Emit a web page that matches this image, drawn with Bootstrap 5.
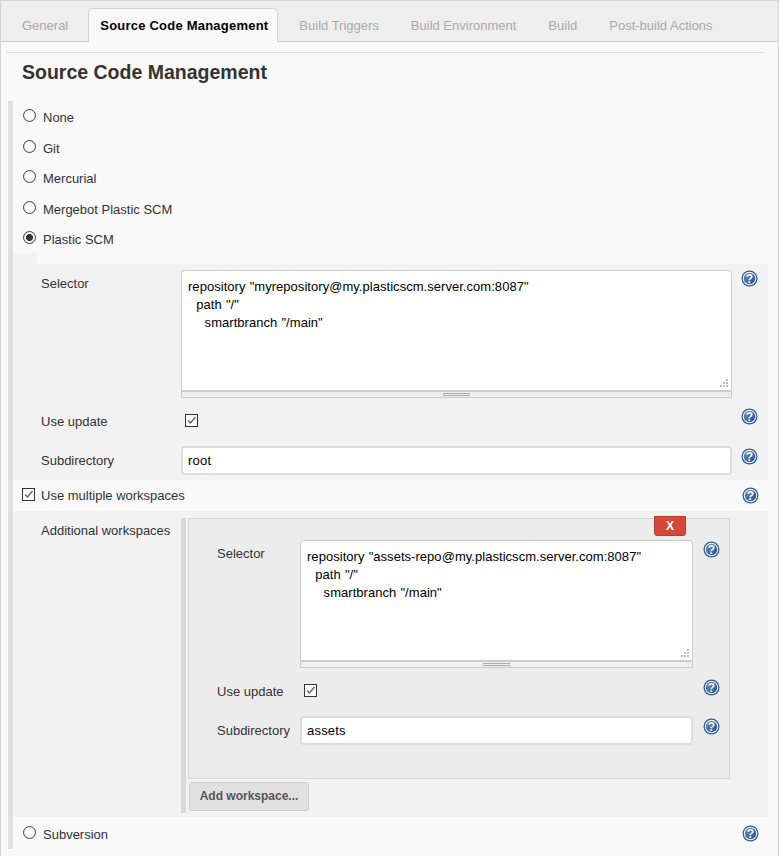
<!DOCTYPE html>
<html lang="en">
<head>
<meta charset="utf-8">
<title>Source Code Management</title>
<link href="https://cdn.jsdelivr.net/npm/bootstrap@5.3.0/dist/css/bootstrap.min.css" rel="stylesheet">
<style>
html,body{height:100%;overflow:hidden}
body{font-family:"Liberation Sans",Arial,sans-serif;font-size:13px;line-height:18px;color:#333;background:#f9f9f9}
.frame{height:856px;overflow:hidden;border-left:1px solid #d3d3d3;border-right:1px solid #d3d3d3;border-top:1px solid #d3d3d3;background:#f9f9f9}
.tabstrip{height:41px;background:#eee;border-bottom:1px solid #ccc;padding:7px 0 0 6px;flex-wrap:nowrap}
.tabstrip .nav-link{font-size:13px;line-height:18px;color:#aaa;height:34px;padding:9px 16px 7px;border:0;margin:0;border-radius:0;white-space:nowrap;background:transparent}
.tabstrip .nav-link.active{color:#000;font-weight:700;letter-spacing:.22px;background:#f9f9f9;border:1px solid #d3d3d3;border-bottom:0;border-radius:5px 5px 0 0;padding:8px 9px 7px 11px;margin-right:5px;height:34px}
.tabstrip .nav-item:first-child .nav-link{padding:9px 20px 7px 15px}
.rule{height:1px;background:#ddd;margin:10px 14px 0 5px;opacity:1;border:0}
.pagehead{font-size:19.5px;line-height:24px;font-weight:700;color:#333;margin:7px 0 0 21px}
.sect{margin:17px 0 0 7px;border-left:5px solid #e0e0e0;width:760px}
.optrow{height:30.5px;padding:2px 0 0 10px;display:flex;align-items:center;gap:7px}
.optrow label,.lastrow label{margin:0;padding-top:2px}
.radiobox.form-check-input{width:13px;height:13px;margin:-3px 0 0 0;flex:none;border:1px solid #444;background-color:#fff;background-image:none;box-shadow:inset 0 0 1px #999;float:none}
.radiobox.form-check-input:checked{background-color:#fff;border-color:#444;background-image:radial-gradient(circle,#333 0 3.2px,#fff 3.8px)}
.tickbox.form-check-input{width:13px;height:13px;margin:0;flex:none;border:1px solid #333;border-radius:0;background-color:#fff;float:none}
.tickbox.form-check-input:checked{background-color:#fff;border-color:#333;background-size:11px 11px;background-position:center;background-image:url("data:image/svg+xml,%3csvg xmlns='http://www.w3.org/2000/svg' viewBox='0 0 11 11'%3e%3cpath fill='none' stroke='%23666' stroke-width='1.4' d='M2 5.5l2.5 2.5 5-6'/%3e%3c/svg%3e")}
.notch{height:11px;margin-top:-1px;width:24px;background:#f2f2f2}
.subpane{background:#f2f2f2;padding-top:6px;height:216px}
.frow{display:flex;align-items:flex-start}
.flabel{width:169px;flex:none;padding-left:28px;padding-top:4px}
.fbody{flex:none;width:551px;margin-left:-1px}
.fhelp{flex:none;margin-left:9px;line-height:0}
.codearea.form-control{display:block;width:100%;height:122px;font-family:"Liberation Sans",Arial,sans-serif;font-size:13px;line-height:18px;color:#000;letter-spacing:.04px;word-spacing:.5px;padding:7px 6px 6px;border:1px solid #ccc;border-bottom-width:2px;border-radius:4px 4px 0 0;resize:none;background:#fff;overflow:hidden}
.areawrap{position:relative}
.dotgrip{position:absolute;right:3px;bottom:10px;width:9px;height:9px}
.barhandle{background:#eee;border:1px solid #ccc;border-top:0;display:flex;flex-direction:column;align-items:center;justify-content:center;gap:1px;box-sizing:border-box;height:6px}
.barhandle i{display:block;width:27px;height:1px;background:#aaa}
.plain.form-control{height:29px;font-size:13px;line-height:18px;color:#000;letter-spacing:.2px;padding:4px 5px;border:2px solid #ddd;border-radius:4px;background:#fff;font-family:"Liberation Sans",Arial,sans-serif}
.r-sel{height:133px}
.subpane .r-sel .flabel{padding-top:5px}
.r-upd{height:43px;padding-top:10px}
.r-upd .flabel{padding-top:0}
.r-upd .fbody{padding-left:4px;padding-top:1px;line-height:0}
.r-upd .fhelp{margin-top:-5px}
.r-sub .flabel{padding-top:6px}
.r-sub .fhelp{margin-top:2px}
.r-sub{height:39px}
.multi{height:31px;display:flex;align-items:center;padding-left:9px;position:relative}
.multi .tickbox{margin-top:-2px}
.multi label{margin:0 0 0 6px;padding-top:2px}
.multi .fhelp{position:absolute;left:729px;top:7px;margin:0}
.addpane{background:#f2f2f2;height:306px;padding-top:7px;display:flex}
.addlab{width:168px;flex:none;padding-left:28px;padding-top:4px}
.stack{border-left:5px solid #d9d9d9;height:295px;padding-left:2px;flex:none;width:549px}
.wsbox{height:261px;width:542px;background:#ececec;border:1px solid #d4d4d4;position:relative;padding-top:21px}
.killbtn.btn{position:absolute;right:43px;top:-3px;width:32px;height:20px;padding:0;background:#d24939;border:1px solid #c23a2b;color:#fff;font-size:12px;line-height:18px;font-weight:700;border-radius:0 0 3px 3px}
.wsbox .flabel{width:111px;padding-left:28px}
.wsbox .r-sel .flabel{padding-top:5px}
.wsbox .r-upd .flabel{padding-top:0}
.wsbox .r-sub .flabel{padding-top:6px}
.wsbox .fbody{width:393px;margin-left:0}
.wsbox .fhelp{margin-left:10px}
.wsbox .r-sel .fhelp{margin-top:1px}
.wsbox .r-upd .fhelp{margin-top:-4px}
.addbtn.btn{margin:3px 0 0 1px;width:120px;height:29px;padding:0;background:#e0e0e0;border:1px solid #ccc;color:#555;font-size:12px;font-weight:700;border-radius:3px;line-height:27px}
.lastrow{height:32px;display:flex;align-items:center;padding:2px 0 0 10px;gap:7px;position:relative}
.lastrow .fhelp{position:absolute;left:729px;top:8px;margin:0}
.qmark{display:block;width:17px;height:17px}
</style>
</head>
<body>
<svg width="0" height="0" class="d-block" aria-hidden="true"><defs>
<symbol id="qh" viewBox="0 0 17 17">
<defs><linearGradient id="qg" x1="0" y1="0" x2="1" y2="1"><stop offset="0" stop-color="#6f93c4"/><stop offset="1" stop-color="#1f4a8c"/></linearGradient></defs>
<circle cx="8.5" cy="8.5" r="8" fill="#2f5b9b"/>
<circle cx="8.5" cy="8.5" r="6.7" fill="#fff"/>
<circle cx="8.5" cy="8.5" r="5.7" fill="url(#qg)"/>
<text x="8.5" y="12.8" text-anchor="middle" font-family="Liberation Sans" font-weight="700" font-size="12" fill="#fff">?</text>
</symbol></defs></svg>
<div class="frame">
  <ul class="nav tabstrip">
    <li class="nav-item"><a class="nav-link" href="#">General</a></li>
    <li class="nav-item"><a class="nav-link active" href="#">Source Code Management</a></li>
    <li class="nav-item"><a class="nav-link" href="#">Build Triggers</a></li>
    <li class="nav-item"><a class="nav-link" href="#">Build Environment</a></li>
    <li class="nav-item"><a class="nav-link" href="#">Build</a></li>
    <li class="nav-item"><a class="nav-link" href="#">Post-build Actions</a></li>
  </ul>
  <hr class="rule">
  <h2 class="pagehead">Source Code Management</h2>
  <div class="sect">
    <div class="optrow"><input class="form-check-input radiobox" type="radio" name="scm" id="o1"><label for="o1">None</label></div>
    <div class="optrow"><input class="form-check-input radiobox" type="radio" name="scm" id="o2"><label for="o2">Git</label></div>
    <div class="optrow"><input class="form-check-input radiobox" type="radio" name="scm" id="o3"><label for="o3">Mercurial</label></div>
    <div class="optrow"><input class="form-check-input radiobox" type="radio" name="scm" id="o4"><label for="o4">Mergebot Plastic SCM</label></div>
    <div class="optrow"><input class="form-check-input radiobox" type="radio" name="scm" id="o5" checked><label for="o5">Plastic SCM</label></div>
    <div class="notch"></div>
    <div class="subpane">
      <div class="frow r-sel">
        <div class="flabel">Selector</div>
        <div class="fbody areawrap">
          <textarea class="form-control codearea" readonly>repository "myrepository@my.plasticscm.server.com:8087"
  path "/"
    smartbranch "/main"</textarea>
          <div class="barhandle"><i></i><i></i></div>
          <svg class="dotgrip" viewBox="0 0 9 9"><path fill="#bbb" d="M6 0h2v2H6zM3 3h2v2H3zM6 3h2v2H6zM0 6h2v2H0zM3 6h2v2H3zM6 6h2v2H6z"/></svg>
        </div>
        <div class="fhelp"><svg class="qmark"><use href="#qh"/></svg></div>
      </div>
      <div class="frow r-upd">
        <div class="flabel">Use update</div>
        <div class="fbody"><input class="form-check-input tickbox" type="checkbox" checked></div>
        <div class="fhelp"><svg class="qmark"><use href="#qh"/></svg></div>
      </div>
      <div class="frow r-sub">
        <div class="flabel">Subdirectory</div>
        <div class="fbody"><input class="form-control plain" type="text" value="root"></div>
        <div class="fhelp"><svg class="qmark"><use href="#qh"/></svg></div>
      </div>
    </div>
    <div class="multi">
      <input class="form-check-input tickbox" type="checkbox" checked id="mw"><label for="mw">Use multiple workspaces</label>
      <div class="fhelp"><svg class="qmark"><use href="#qh"/></svg></div>
    </div>
    <div class="addpane">
      <div class="addlab">Additional workspaces</div>
      <div class="stack">
        <div class="wsbox">
          <button class="btn killbtn" type="button">X</button>
          <div class="frow r-sel">
            <div class="flabel">Selector</div>
            <div class="fbody areawrap">
              <textarea class="form-control codearea" readonly>repository "assets-repo@my.plasticscm.server.com:8087"
  path "/"
    smartbranch "/main"</textarea>
              <div class="barhandle"><i></i><i></i></div>
              <svg class="dotgrip" viewBox="0 0 9 9"><path fill="#bbb" d="M6 0h2v2H6zM3 3h2v2H3zM6 3h2v2H6zM0 6h2v2H0zM3 6h2v2H3zM6 6h2v2H6z"/></svg>
            </div>
            <div class="fhelp"><svg class="qmark"><use href="#qh"/></svg></div>
          </div>
          <div class="frow r-upd">
            <div class="flabel">Use update</div>
            <div class="fbody"><input class="form-check-input tickbox" type="checkbox" checked></div>
            <div class="fhelp"><svg class="qmark"><use href="#qh"/></svg></div>
          </div>
          <div class="frow r-sub">
            <div class="flabel">Subdirectory</div>
            <div class="fbody"><input class="form-control plain" type="text" value="assets"></div>
            <div class="fhelp"><svg class="qmark"><use href="#qh"/></svg></div>
          </div>
        </div>
        <button class="btn addbtn" type="button">Add workspace...</button>
      </div>
    </div>
    <div class="lastrow">
      <input class="form-check-input radiobox" type="radio" name="scm" id="o6"><label for="o6">Subversion</label>
      <div class="fhelp"><svg class="qmark"><use href="#qh"/></svg></div>
    </div>
  </div>
</div>
<script src="https://cdn.jsdelivr.net/npm/bootstrap@5.3.0/dist/js/bootstrap.bundle.min.js"></script>
</body>
</html>
